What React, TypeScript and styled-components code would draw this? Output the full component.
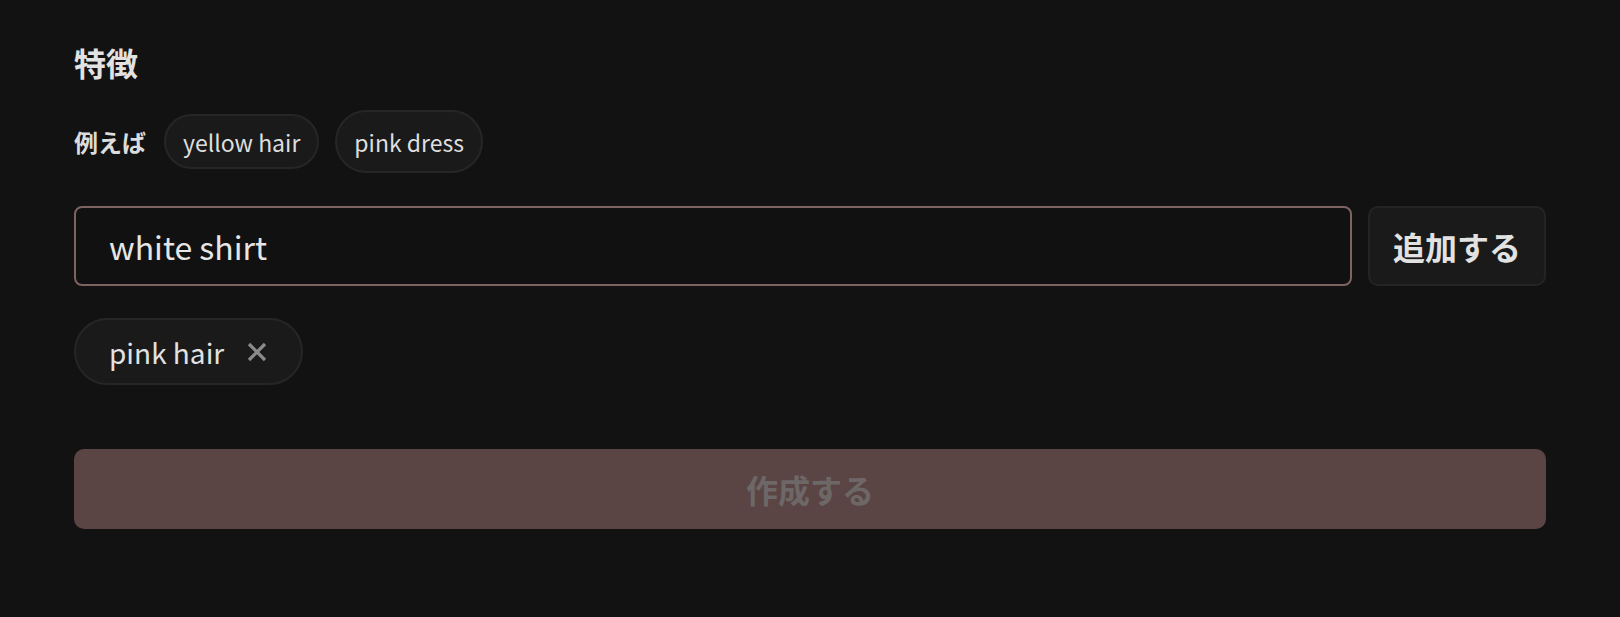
import React, { useState } from "react";
import styled, { createGlobalStyle } from "styled-components";

const GlobalStyle = createGlobalStyle`
  html, body {
    margin: 0;
    padding: 0;
    background: #121212;
  }
  body {
    font-family: "Noto Sans CJK JP", "Noto Sans", sans-serif;
    color: #e4e4e4;
  }
  * { box-sizing: border-box; }
`;

const Page = styled.div`
  padding: 38px 74px 40px;
  min-height: 617px;
  background: #121212;
`;

const Section = styled.section`
  display: flex;
  flex-direction: column;
`;

const Title = styled.h2`
  margin: 0;
  font-size: 32px;
  line-height: 48px;
  font-weight: 700;
  color: #e2e2e2;
`;

const ExamplesRow = styled.div`
  display: flex;
  align-items: center;
  gap: 16px;
  margin-top: 24px;
  height: 63px;
`;

const ExampleLabel = styled.span`
  font-size: 24px;
  font-weight: 700;
  color: #dcdcdc;
  margin-right: 2px;
`;

const ExampleChip = styled.button<{ $tall?: boolean }>`
  display: inline-flex;
  align-items: center;
  height: ${(p) => (p.$tall ? "63px" : "55px")};
  padding: 0 17px;
  border-radius: 999px;
  border: 2px solid #262626;
  background: #1a1a1a;
  color: #dedede;
  font-family: "Noto Sans CJK JP", "Noto Sans", sans-serif;
  font-size: 23px;
  cursor: pointer;
`;

const InputRow = styled.div`
  display: flex;
  gap: 16px;
  margin-top: 33px;
`;

const TextInput = styled.input`
  flex: 1;
  height: 80px;
  padding: 0 33px;
  border: 2px solid #7f6262;
  border-radius: 8px;
  background: #111111;
  color: #e6e6e6;
  font-family: "Noto Sans CJK JP", "Noto Sans", sans-serif;
  font-size: 32px;
  outline: none;
`;

const AddButton = styled.button`
  width: 178px;
  height: 80px;
  border: 2px solid #242424;
  border-radius: 10px;
  background: #1a1a1a;
  color: #e2e2e2;
  font-family: "Noto Sans CJK JP", "Noto Sans", sans-serif;
  font-size: 32px;
  font-weight: 700;
  cursor: pointer;
`;

const TagList = styled.div`
  display: flex;
  flex-wrap: wrap;
  gap: 12px;
  margin-top: 32px;
`;

const Tag = styled.div`
  display: inline-flex;
  align-items: center;
  gap: 23px;
  height: 67px;
  padding: 0 34px 0 33px;
  border-radius: 999px;
  border: 2px solid #262626;
  background: #1a1a1a;
`;

const TagText = styled.span`
  font-size: 28px;
  color: #e2e2e2;
`;

const RemoveButton = styled.button`
  display: inline-flex;
  align-items: center;
  justify-content: center;
  padding: 0;
  border: none;
  background: transparent;
  color: #8a8a8a;
  cursor: pointer;
`;

const CreateButton = styled.button`
  margin-top: 64px;
  height: 80px;
  width: 100%;
  border: none;
  border-radius: 10px;
  background: #5a4544;
  color: #6d6767;
  font-family: "Noto Sans CJK JP", "Noto Sans", sans-serif;
  font-size: 32px;
  font-weight: 700;
  cursor: not-allowed;
`;

const XIcon = () => (
  <svg width="20" height="20" viewBox="0 0 20 20" fill="none">
    <path d="M2 2 L18 18 M18 2 L2 18" stroke="currentColor" strokeWidth="3.2" strokeLinecap="butt" />
  </svg>
);

export default function App() {
  const [value, setValue] = useState("white shirt");
  const [tags, setTags] = useState<string[]>(["pink hair"]);

  return (
    <>
      <GlobalStyle />
      <Page>
        <Section>
          <Title>特徴</Title>
          <ExamplesRow>
            <ExampleLabel>例えば</ExampleLabel>
            <ExampleChip>yellow hair</ExampleChip>
            <ExampleChip $tall>pink dress</ExampleChip>
          </ExamplesRow>
          <InputRow>
            <TextInput value={value} onChange={(e) => setValue(e.target.value)} />
            <AddButton onClick={() => value && setTags([...tags, value])}>追加する</AddButton>
          </InputRow>
          <TagList>
            {tags.map((t, i) => (
              <Tag key={i}>
                <TagText>{t}</TagText>
                <RemoveButton onClick={() => setTags(tags.filter((_, j) => j !== i))}>
                  <XIcon />
                </RemoveButton>
              </Tag>
            ))}
          </TagList>
          <CreateButton disabled>作成する</CreateButton>
        </Section>
      </Page>
    </>
  );
}
